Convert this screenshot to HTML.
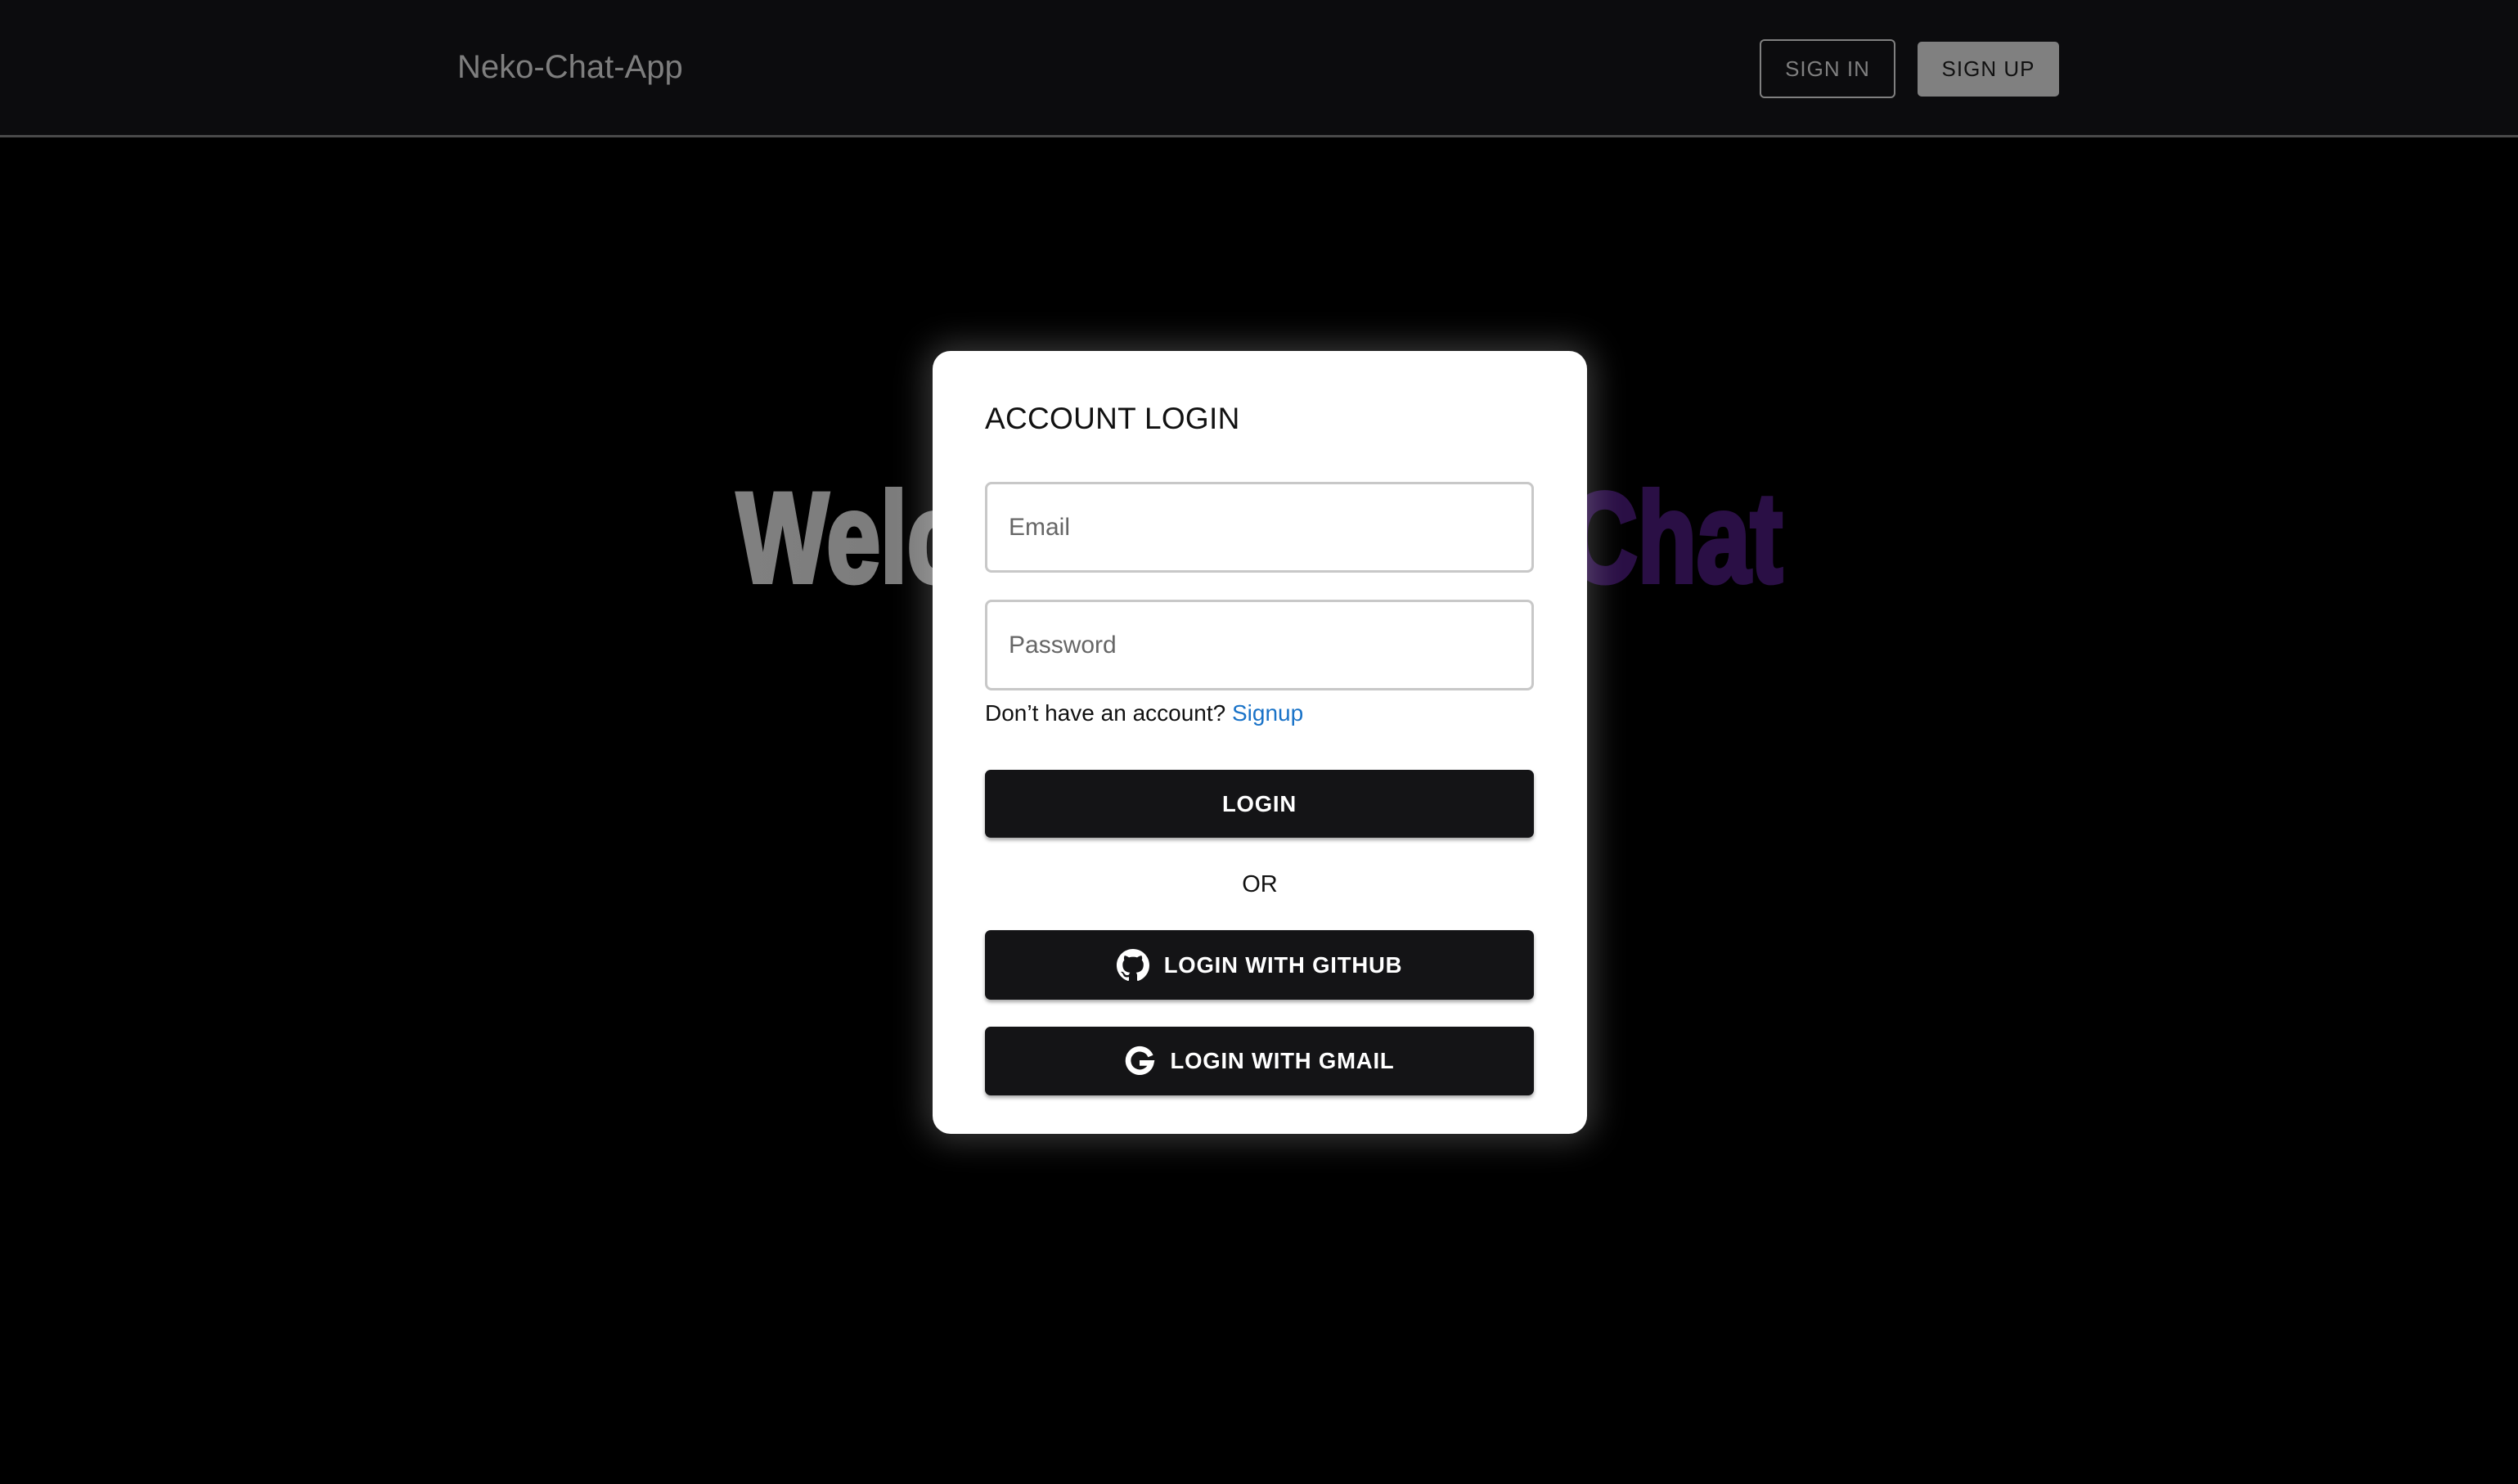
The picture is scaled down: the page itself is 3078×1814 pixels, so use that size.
<!DOCTYPE html>
<html><head><meta charset="utf-8">
<style>
*{box-sizing:border-box;margin:0;padding:0}
html,body{width:3078px;height:1814px;background:#000;overflow:hidden;font-family:"Liberation Sans",sans-serif}
.nav{position:absolute;left:0;top:0;width:3078px;height:168px;background:#0c0c0e;border-bottom:3px solid #4a4a4a;box-shadow:0 4px 10px rgba(0,0,0,.6)}
.brand{position:absolute;left:559px;top:60px;font-size:40px;color:#7e7e7e;letter-spacing:0}
.b1{position:absolute;left:2151px;top:48px;width:166px;height:72px;border:2px solid #808080;border-radius:6px;color:#808080;font-size:26px;display:flex;align-items:center;justify-content:center;letter-spacing:1px}
.b2{position:absolute;left:2344px;top:51px;width:173px;height:67px;background:#808080;border-radius:5px;color:#111;font-size:26px;display:flex;align-items:center;justify-content:center;letter-spacing:1px}
.welcome{position:absolute;left:0;top:0}
.card{position:absolute;left:1140px;top:429px;width:800px;height:957px;background:#fff;border-radius:22px;box-shadow:0 0 40px 8px rgba(255,255,255,.22)}
.title{position:absolute;left:64px;top:62px;font-size:37px;color:#111;letter-spacing:.3px}
.inp{position:absolute;left:64px;width:671px;height:111px;border:3px solid #c8c8c8;border-radius:8px;font-size:30px;color:#666;padding-left:26px;display:flex;align-items:center}
.note{position:absolute;left:64px;top:427px;font-size:28px;color:#111}
.note span{color:#1a73c8}
.btn{position:absolute;left:64px;width:671px;background:#141416;border-radius:7px;color:#fff;font-size:27.5px;font-weight:bold;letter-spacing:.8px;display:flex;align-items:center;justify-content:center;box-shadow:0 3px 5px rgba(0,0,0,.35)}
.btn svg{margin-right:18px}
.or{position:absolute;left:0;width:800px;top:636px;text-align:center;font-size:29px;color:#111}
</style></head><body>
<div class="nav">
<div class="brand">Neko-Chat-App</div>
<div class="b1">SIGN IN</div>
<div class="b2">SIGN UP</div>
</div>
<svg class="welcome" width="3078" height="1814">
<defs><linearGradient id="g" x1="901" x2="2179" y1="0" y2="0" gradientUnits="userSpaceOnUse">
<stop offset="0" stop-color="#808080"/><stop offset="0.25" stop-color="#7a7a7a"/><stop offset="0.75" stop-color="#2a0f45"/><stop offset="1" stop-color="#2a0f45"/></linearGradient></defs>
<text x="901" y="711" textLength="1278" lengthAdjust="spacingAndGlyphs" font-family="Liberation Sans, sans-serif" font-weight="bold" font-size="156" fill="url(#g)" stroke="url(#g)" stroke-width="6">Welcome to Neko Chat</text>
</svg>
<div class="card">
<div class="title">ACCOUNT LOGIN</div>
<div class="inp" style="top:160px">Email</div>
<div class="inp" style="top:304px">Password</div>
<div class="note">Don’t have an account? <span>Signup</span></div>
<div class="btn" style="top:512px;height:83px">LOGIN</div>
<div class="or">OR</div>
<div class="btn" style="top:708px;height:85px">
<svg width="40" height="40" viewBox="0 0 16 16"><path fill="#fff" d="M8 0C3.58 0 0 3.580 0 8c0 3.54 2.29 6.53 5.47 7.59.4.07.55-.17.55-.38 0-.19-.01-.82-.01-1.49-2.01.37-2.53-.49-2.69-.94-.09-.23-.48-.94-.82-1.130-.28-.15-.68-.52-.01-.53.63-.01 1.080.58 1.23.82.72 1.21 1.87.87 2.33.66.07-.52.28-.87.51-1.07-1.78-.2-3.64-.89-3.64-3.95 0-.87.31-1.59.82-2.15-.08-.2-.36-1.02.08-2.12 0 0 .67-.21 2.2.82.64-.18 1.32-.27 2-.27.68 0 1.36.09 2 .27 1.53-1.04 2.2-.82 2.2-.82.44 1.1.16 1.92.08 2.12.51.56.82 1.27.82 2.15 0 3.07-1.87 3.75-3.65 3.95.29.25.54.73.54 1.48 0 1.07-.01 1.93-.01 2.2 0 .21.15.46.55.38A8.013 8.013 0 0016 8c0-4.42-3.58-8-8-8z"/></svg>LOGIN WITH GITHUB</div>
<div class="btn" style="top:826px;height:84px">
<svg width="38" height="38" viewBox="0 0 24 24"><path fill="none" stroke="#fff" stroke-width="4.2" d="M20.5 8.2A9 9 0 1 0 21 13.5H12"/></svg>LOGIN WITH GMAIL</div>
</div>
</body></html>
